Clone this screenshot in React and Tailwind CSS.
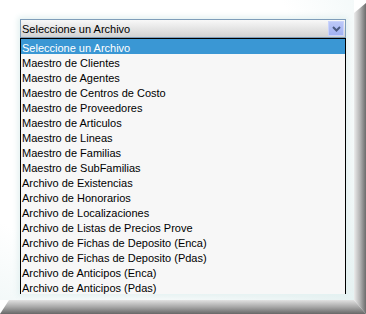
import React from 'react'

const archivos = [
  'Seleccione un Archivo',
  'Maestro de Clientes',
  'Maestro de Agentes',
  'Maestro de Centros de Costo',
  'Maestro de Proveedores',
  'Maestro de Articulos',
  'Maestro de Lineas',
  'Maestro de Familias',
  'Maestro de SubFamilias',
  'Archivo de Existencias',
  'Archivo de Honorarios',
  'Archivo de Localizaciones',
  'Archivo de Listas de Precios Prove',
  'Archivo de Fichas de Deposito (Enca)',
  'Archivo de Fichas de Deposito (Pdas)',
  'Archivo de Anticipos (Enca)',
  'Archivo de Anticipos (Pdas)',
]

function Chevron() {
  return (
    <svg width="9" height="6" viewBox="0 0 9 6" className="block">
      <polyline points="1,1 4.5,4.5 8,1" fill="none" stroke="#4a5a80" strokeWidth="2" />
    </svg>
  )
}

function App() {
  const selected = 0

  return (
    <div className="w-[366px] h-[314px] grid grid-cols-[1fr_12px] grid-rows-[1fr_14px] bg-white text-[11px] font-['Liberation_Sans',Arial,sans-serif] overflow-hidden">
      {/* contenido */}
      <div className="col-start-1 row-start-1 bg-[#eaf4f4] overflow-hidden">
        <div className="h-full bg-[radial-gradient(ellipse_at_30%_25%,#ffffff_55%,#e6f2f2_100%)] pl-5 pt-[19px] pr-2">
          <div className="shadow-[0_0_6px_2px_#e2f0f0]">
            {/* select */}
            <div className="h-[19px] border border-[#7f9db9] bg-gradient-to-b from-[#f8f8f8] to-[#d2d2d2] flex items-center justify-between pl-[1px] pr-[1px]">
              <span className="text-black leading-none pt-[2px]">Seleccione un Archivo</span>
              <div className="w-4 h-[15px] border border-[#c9d3fb] bg-gradient-to-b from-[#bcc8f8] to-[#a2b2f2] flex items-center justify-center">
                <Chevron />
              </div>
            </div>
            {/* lista desplegada */}
            <ul className="border-l border-r border-t border-black bg-[#f7f7f7]">
              {archivos.map((a, i) => (
                <li
                  key={a}
                  className={
                    i === selected
                      ? 'h-[15px] leading-[19px] pl-[1px] bg-[#3a97d4] text-white whitespace-nowrap'
                      : 'h-[15px] leading-[19px] pl-[1px] text-black whitespace-nowrap'
                  }
                >
                  {a}
                </li>
              ))}
            </ul>
          </div>
        </div>
      </div>

      {/* marco derecho */}
      <div className="col-start-2 row-start-1 row-span-2 bg-gradient-to-r from-[#ececec] via-[#b4b4b4] to-[#6c6c6c] [clip-path:polygon(0_13px,100%_3px,100%_100%,0_calc(100%-14px))]" />

      {/* marco inferior */}
      <div className="col-start-1 col-span-2 row-start-2 bg-gradient-to-b from-[#e2e2e2] via-[#a8a8a8] to-[#686868] [clip-path:polygon(9px_0,calc(100%-12px)_0,100%_100%,0_100%)]" />
    </div>
  )
}

export default App
